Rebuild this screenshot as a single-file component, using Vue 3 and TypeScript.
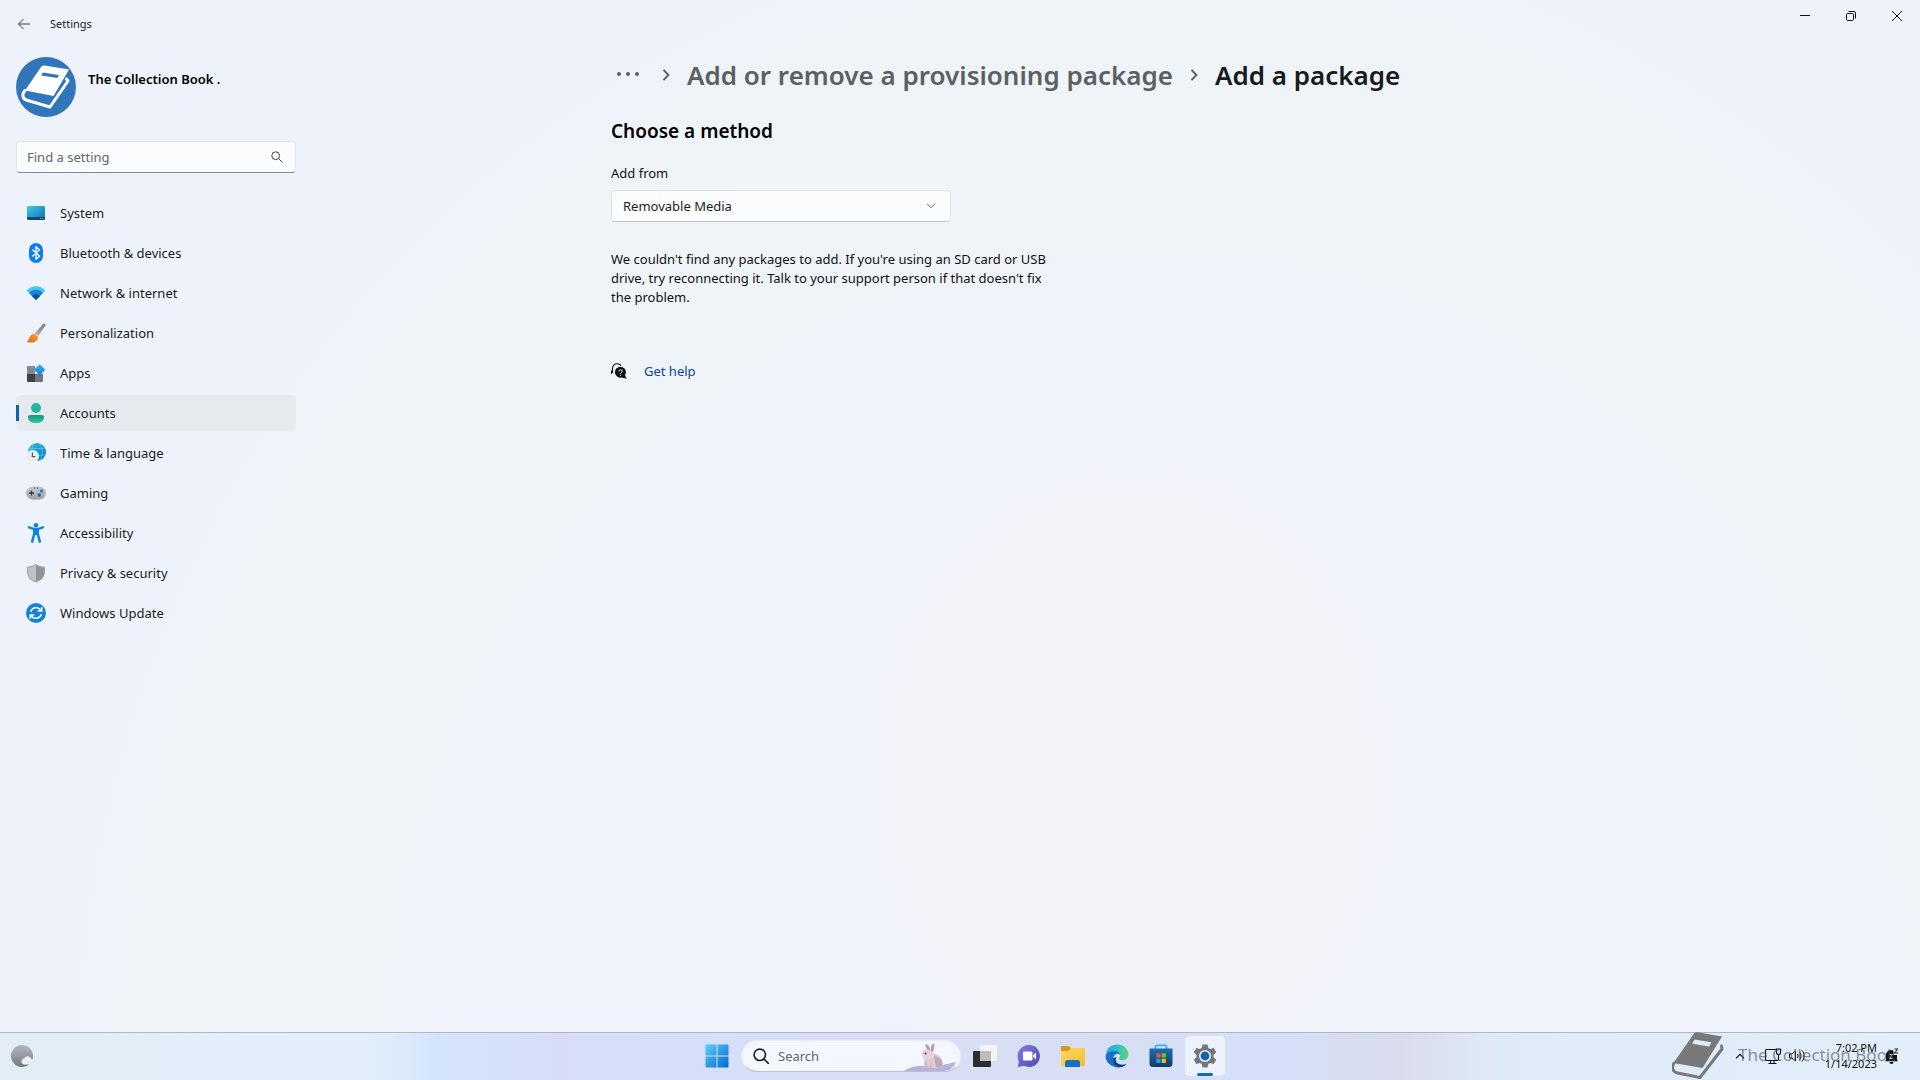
<script setup lang="ts">
import { ref } from 'vue'

interface NavItem {
  label: string
  art: string
}

const current = ref('Accounts')
const query = ref('')
const source = ref('Removable Media')

const navItems: NavItem[] = [
  {
    label: 'System',
    art: '<rect x="1" y="3" width="18" height="14" rx="1.4" fill="url(#g-sys)"/><path d="M1 14h18v1.600a1.400 1.400 0 0 1-1.400 1.400H2.400A1.400 1.400 0 0 1 1 15.600z" fill="#0b4a72"/><circle cx="14.500" cy="15.500" r=".5" fill="#9fd8f0"/><circle cx="16.500" cy="15.500" r=".5" fill="#9fd8f0"/>',
  },
  {
    label: 'Bluetooth & devices',
    art: '<rect x="3" y="0" width="14" height="20" rx="7" fill="#0b7df0"/><path d="M6.300 6.500l7.200 6.800-3.600 3V3.700l3.600 3-7.200 6.800" fill="none" stroke="#fff" stroke-width="1.300" stroke-linejoin="round"/>',
  },
  {
    label: 'Network & internet',
    art: '<path d="M.5 7.500C6 1.800 14 1.800 19.500 7.500L10 17z" fill="#49c8ef"/><path d="M3 10c4-4.200 10-4.200 14 0l-7 7z" fill="#1a86d6"/><path d="M6 13c2.400-2.300 5.600-2.300 8 0l-4 4z" fill="#0a4f9c"/>',
  },
  {
    label: 'Personalization',
    art: '<path d="M18.800.6c1 .6.7 1.700.2 2.600l-6.600 9.600-3.600-2.500L17 1.100c.6-.6 1.200-.8 1.800-.5z" fill="url(#g-grey)"/><path d="M8.200 10.600l3.700 2.700c.7 3.800-2.200 6.300-6 6.300-2 0-4.100-.2-5.200-1.400 1.700-.4 2-1.500 2.600-3.200.8-2.400 2.500-4.100 4.900-4.400z" fill="url(#g-orange)"/>',
  },
  {
    label: 'Apps',
    art: '<path d="M1 3h8v8H1z" fill="#858990"/><path d="M1 11h8v8H2a1 1 0 0 1-1-1z" fill="#3f4347"/><path d="M9 11h8v7a1 1 0 0 1-1 1H9z" fill="#6f747a"/><rect x="9.700" y="2.700" width="8" height="8" rx="1.200" transform="rotate(45 13.700 6.700)" fill="url(#g-blue)"/>',
  },
  {
    label: 'Accounts',
    art: '<circle cx="10" cy="5" r="5" fill="#22b79f"/><path d="M2 14a2 2 0 0 1 2-2h12a2 2 0 0 1 2 2c0 4-3.500 6-8 6s-8-2-8-6z" fill="url(#g-green)"/>',
  },
  {
    label: 'Time & language',
    art: '<circle cx="11" cy="9" r="9" fill="url(#g-globe)"/><path d="M3 5.500h16M2.500 12h17M8 1c-3 5-3 11 0 16M14 1c3 5 3 11 0 16" stroke="#6fdcf3" stroke-width=".5" fill="none"/><circle cx="6.600" cy="13.400" r="6.400" fill="#eceef0"/><path d="M6.400 9.600v4h3" stroke="#51565c" stroke-width="1.200" fill="none"/>',
  },
  {
    label: 'Gaming',
    art: '<rect x="0" y="3.500" width="20" height="13" rx="6.500" fill="url(#g-pad)"/><path d="M3 10h5M5.500 7.500v5" stroke="#34383c" stroke-width="1.300"/><circle cx="15.500" cy="8" r="1.700" fill="#2f7fc4"/><circle cx="13.300" cy="12" r="1.700" fill="#2467a8"/><circle cx="8.500" cy="5" r=".7" fill="#44484d"/><circle cx="11.500" cy="5" r=".7" fill="#44484d"/>',
  },
  {
    label: 'Accessibility',
    art: '<circle cx="10" cy="2.300" r="2.300" fill="#1683d8"/><path d="M3 4.300l4.500 1.600h5L17 4.300" fill="none" stroke="#1683d8" stroke-width="2.400" stroke-linecap="round" stroke-linejoin="round"/><path d="M7 5.500h6v6.500H7z" fill="#1683d8"/><path d="M8.200 11L6.200 18.600M11.800 11l2 7.600" stroke="#1683d8" stroke-width="2.600" stroke-linecap="round"/>',
  },
  {
    label: 'Privacy & security',
    art: '<path d="M10 1c2.800 2 5.600 2.600 9 2.700V9c0 5-3.600 8.600-9 10.400C4.600 17.600 1 14 1 9V3.700C4.400 3.600 7.200 3 10 1z" fill="#a3a7ab"/><path d="M10 2.200c2.400 1.600 5 2.300 7.900 2.500V9c0 4.500-3 7.600-7.900 9.200z" fill="#8f9397"/><path d="M10 2.200v16C5.100 16.600 2.100 13.500 2.100 9V4.700C5 4.500 7.600 3.800 10 2.200z" fill="#bfc3c7"/>',
  },
  {
    label: 'Windows Update',
    art: '<circle cx="10" cy="10" r="10" fill="#1583d4"/><path d="M4.700 8.700C6 4.200 12 3.300 14.800 7M15.300 11.300C14 15.800 8 16.700 5.200 13" fill="none" stroke="#fff" stroke-width="1.500"/><path d="M15.700 4v4h-4M4.300 16v-4h4" fill="none" stroke="#fff" stroke-width="1.500"/>',
  },
]
</script>

<template>
  <div class="desktop">
    <svg class="defs" width="0" height="0" aria-hidden="true">
      <defs>
        <linearGradient id="g-sys" x1="0" y1="0" x2="1" y2="1"><stop offset="0" stop-color="#3ccbe4" /><stop offset="1" stop-color="#0f6fb8" /></linearGradient>
        <linearGradient id="g-grey" x1="1" y1="0" x2="0" y2="1"><stop offset="0" stop-color="#777b80" /><stop offset="1" stop-color="#b4b7ba" /></linearGradient>
        <linearGradient id="g-orange" x1="1" y1="0" x2="0" y2="1"><stop offset="0" stop-color="#f9a53a" /><stop offset="1" stop-color="#dd6410" /></linearGradient>
        <linearGradient id="g-blue" x1="0" y1="0" x2="1" y2="1"><stop offset="0" stop-color="#3ab5f0" /><stop offset="1" stop-color="#1580cf" /></linearGradient>
        <linearGradient id="g-green" x1="0" y1="0" x2="0" y2="1"><stop offset="0" stop-color="#17977f" /><stop offset="1" stop-color="#2cc6a8" /></linearGradient>
        <linearGradient id="g-globe" x1="0" y1="0" x2="1" y2="1"><stop offset="0" stop-color="#26c0dc" /><stop offset="1" stop-color="#0d74c8" /></linearGradient>
        <linearGradient id="g-pad" x1="0" y1="0" x2="0" y2="1"><stop offset="0" stop-color="#c9ccd0" /><stop offset="1" stop-color="#9da2a8" /></linearGradient>
        <linearGradient id="g-start" x1="0" y1="0" x2="1" y2="1"><stop offset="0" stop-color="#5ad0fb" /><stop offset="1" stop-color="#0468c8" /></linearGradient>
        <linearGradient id="g-chat" x1="0" y1="0" x2="1" y2="1"><stop offset="0" stop-color="#8a79dc" /><stop offset="1" stop-color="#4c4bb4" /></linearGradient>
        <linearGradient id="g-folder" x1="0" y1="0" x2="1" y2="1"><stop offset="0" stop-color="#ffd968" /><stop offset="1" stop-color="#f5bb2c" /></linearGradient>
        <linearGradient id="g-edge" x1="0" y1="0" x2="1" y2="0"><stop offset="0" stop-color="#24a8e4" /><stop offset=".5" stop-color="#2fc0c8" /><stop offset="1" stop-color="#62d66a" /></linearGradient>
        <linearGradient id="g-store" x1="0" y1="0" x2="0" y2="1"><stop offset="0" stop-color="#1b6fae" /><stop offset="1" stop-color="#153a63" /></linearGradient>
        <linearGradient id="g-moon" x1="0" y1="0" x2="0" y2="1"><stop offset="0" stop-color="#b3b8be" /><stop offset="1" stop-color="#747b82" /></linearGradient>
      </defs>
    </svg>

    <section class="window">
      <header class="titlebar">
        <button class="back" type="button" aria-label="Back">
          <svg width="14" height="12" viewBox="0 0 14 12"><path d="M13 6H1.500M6.500 1l-5 5 5 5" fill="none" stroke="#3c4045" stroke-width="1" /></svg>
        </button>
        <span class="app-name">Settings</span>
        <div class="caption">
          <button type="button" aria-label="Minimize">
            <svg width="10" height="10" viewBox="0 0 10 10"><path d="M0 4.500h10" stroke="#111" /></svg>
          </button>
          <button type="button" aria-label="Restore">
            <svg width="10" height="10" viewBox="0 0 10 10" fill="none" stroke="#111"><rect x=".5" y="2.500" width="7" height="7" rx="1.200" /><path d="M2.500.5H8A1.500 1.500 0 0 1 9.500 2v5.500" /></svg>
          </button>
          <button type="button" aria-label="Close">
            <svg width="10" height="10" viewBox="0 0 10 10"><path d="M0 0l10 10M10 0L0 10" stroke="#111" /></svg>
          </button>
        </div>
      </header>

      <div class="body">
        <aside class="sidebar">
          <div class="profile">
            <svg width="60" height="60" viewBox="0 0 60 60">
              <circle cx="30" cy="30" r="30" fill="#3176bb" />
              <path d="M28.500 8.500L53 12.500 37.500 39 9 33.500 24 11.500q1.700-3.500 4.500-3z" fill="#fff" />
              <path d="M27 15.500l16 2.500-1.700 3-16.300-2.600z" fill="#3176bb" />
              <path d="M9 33.500c-3.500 4-2.500 8.500 2 9.800L34 50l18-26-1.500-2" fill="none" stroke="#fff" stroke-width="3" stroke-linecap="round" stroke-linejoin="round" />
            </svg>
            <span class="name">The Collection Book .</span>
          </div>

          <label class="search">
            <input v-model="query" type="text" placeholder="Find a setting" aria-label="Find a setting" />
            <svg width="12" height="12" viewBox="0 0 12 12" fill="none" stroke="#40454a"><circle cx="4.700" cy="4.700" r="3.900" /><path d="M7.500 7.500l4 4" /></svg>
          </label>

          <nav>
            <a
              v-for="item in navItems"
              :key="item.label"
              href="#"
              :class="{ active: item.label === current }"
              @click.prevent="current = item.label"
            >
              <svg width="20" height="20" viewBox="0 0 20 20" aria-hidden="true" v-html="item.art"></svg>
              <span>{{ item.label }}</span>
            </a>
          </nav>
        </aside>

        <main>
          <div class="page">
            <div class="crumbs">
              <button class="more" type="button" aria-label="More">
                <svg width="24" height="6" viewBox="0 0 24 6" fill="#5a5e62"><circle cx="3" cy="3" r="2" /><circle cx="12" cy="3" r="2" /><circle cx="21" cy="3" r="2" /></svg>
              </button>
              <svg class="sep" width="8" height="12" viewBox="0 0 8 12"><path d="M1.500 1l5 5-5 5" fill="none" stroke="#5a5e62" stroke-width="1.800" /></svg>
              <a href="#">Add or remove a provisioning package</a>
              <svg class="sep" width="8" height="12" viewBox="0 0 8 12"><path d="M1.500 1l5 5-5 5" fill="none" stroke="#5a5e62" stroke-width="1.800" /></svg>
              <h1>Add a package</h1>
            </div>

            <h2>Choose a method</h2>
            <label class="field-label" for="source">Add from</label>
            <div class="select">
              <select id="source" v-model="source">
                <option>Removable Media</option>
              </select>
              <svg width="10" height="6" viewBox="0 0 10 6"><path d="M1 .7l4 4 4-4" fill="none" stroke="#5c6065" /></svg>
            </div>

            <p>
              We couldn't find any packages to add. If you're using an SD card or USB<br />
              drive, try reconnecting it. Talk to your support person if that doesn't fix<br />
              the problem.
            </p>

            <div class="help">
              <svg width="16" height="16" viewBox="0 0 16 16">
                <path d="M1.500 10V5.500C1.500 2.500 3.500.8 6 .8c2 0 3.300.7 4 1.800M.5 7.500V11" fill="none" stroke="#111" stroke-width="1.100" />
                <circle cx="9.400" cy="9.200" r="5.500" fill="#111" />
                <path d="M13.500 11l2.300 4.800-5.300-1.200z" fill="#111" />
                <path d="M8 8.300c0-2 3.200-2 3.200-.1 0 1.200-1.600 1.200-1.600 2.400M9.600 11.700v1" fill="none" stroke="#fff" stroke-width="1" />
              </svg>
              <a href="#">Get help</a>
            </div>
          </div>
        </main>
      </div>
    </section>

    <footer class="taskbar">
      <button class="weather" type="button" aria-label="Widgets">
        <svg width="24" height="24" viewBox="0 0 24 24"><circle cx="12" cy="12" r="11" fill="url(#g-moon)" /><path d="M14 20.500a3.200 3.200 0 0 1 .2-6.300 4 4 0 0 1 7.300.9 2.800 2.800 0 0 1 0 5.400z" fill="#eceef1" /></svg>
      </button>

      <div class="dock">
        <button class="tile" type="button" aria-label="Start">
          <svg width="24" height="24" viewBox="0 0 24 24" fill="url(#g-start)"><path d="M.5 1.500a1 1 0 0 1 1-1h10v11H.5zM12.500.5h10a1 1 0 0 1 1 1v10h-11zM.5 12.500h11v11h-10a1 1 0 0 1-1-1zM12.500 12.500h11v10a1 1 0 0 1-1 1h-10z" /></svg>
        </button>
        <label class="find">
          <svg width="16" height="16" viewBox="0 0 16 16" fill="none" stroke="#222" stroke-width="1.700"><circle cx="6.800" cy="6.800" r="5.700" /><path d="M11 11l4.300 4.300" stroke-linecap="round" /></svg>
          <input type="text" placeholder="Search" aria-label="Search" />
          <svg class="rabbit" width="52" height="28" viewBox="0 0 52 28">
            <path d="M0 28c6-5 16-6 26-5 10 .5 20-3 26-4-2 5-6 9-12 9z" fill="#b6b2dc" />
            <path d="M22 25c-3-4-2-10 1-13l5-2c7 1 11 6 11 11 0 3-2 4-4 4z" fill="#dccbd4" />
            <path d="M30 13c6 1 9 5 8 10-2 2-4 2-6 1z" fill="#bca8be" />
            <path d="M18 11c0-3 3-5 6-5s5 3 5 6-3 5-6 5-5-3-5-6z" fill="#e2d3d8" />
            <path d="M24 7c-3-3-3-5-2-6 2 0 4 3 4 6zM27 8c-1-4 1-7 3-8 1 3 0 6-1 9z" fill="#b99fae" />
            <circle cx="21.500" cy="10.500" r="1" fill="#43394a" />
            <path d="M21 16l3 9h-3zM27 18l1 8h-3z" fill="#c9b4c4" />
          </svg>
        </label>
        <button class="tile" type="button" aria-label="Task View">
          <svg width="24" height="24" viewBox="0 0 24 24"><rect x="0" y="7" width="18" height="16" rx="1" fill="#2d2d2f" /><rect x="7" y="1" width="17" height="16" rx="1" fill="#f4f4f4" /><path d="M7 7h11v10H8a1 1 0 0 1-1-1z" fill="#bdbdbb" /></svg>
        </button>
        <button class="tile" type="button" aria-label="Chat">
          <svg width="24" height="24" viewBox="0 0 24 24"><path d="M12 1a11 11 0 1 1-5 20.800L1 23l.8-6A11 11 0 0 1 12 1z" fill="url(#g-chat)" /><rect x="6" y="7.500" width="9.500" height="9" rx="1.200" fill="#fff" /><path d="M16.300 11l2.700-2.500v7L16.300 13z" fill="#fff" /></svg>
        </button>
        <button class="tile" type="button" aria-label="File Explorer">
          <svg width="24" height="24" viewBox="0 0 24 24"><path d="M0 3a1 1 0 0 1 1-1h7l2 2-2 4H0z" fill="#d99a17" /><path d="M0 7h7.500l3-3H23a1 1 0 0 1 1 1v16a1 1 0 0 1-1 1H1a1 1 0 0 1-1-1z" fill="url(#g-folder)" /><path d="M4 23v-4.500A2.500 2.500 0 0 1 6.500 16h10a2.500 2.500 0 0 1 2.500 2.500V23z" fill="#1271c4" /></svg>
        </button>
        <button class="tile" type="button" aria-label="Edge">
          <svg width="24" height="24" viewBox="0 0 24 24"><path d="M1 10C2 4 6.500.5 12 .5c7 0 11.500 5 11.500 9.800 0 3.700-2.700 6-5.800 6-2.300 0-3.700-.8-3.700-1.700 0-.8 1.200-1.300 1.200-3 0-2-2-4-5-4-4 0-7.700 2.200-9.200 5z" fill="url(#g-edge)" /><path d="M.6 12C2 8.800 5.500 7 9.300 7c3.600 0 5.800 2 5.900 4.200-1-1.400-2.400-1.700-3.800-1.300-2.300.7-3.600 3-3.300 6 .4 3.500 3.500 6.200 7.400 6.200 2.600 0 4.600-.9 6.200-2-2.200 2.300-5.500 3.600-9 3.400C5.800 23 .4 18 .6 12z" fill="#1670c8" /><path d="M8.200 14c-1 5 2.600 9.300 7 9.100 2.800-.2 5-1.500 6.500-3.400-2.400 1.200-7 1.500-9.500-.7-1.900-1.600-1.800-4.100-.6-6z" fill="#123f82" /></svg>
        </button>
        <button class="tile" type="button" aria-label="Store">
          <svg width="24" height="24" viewBox="0 0 24 24"><path d="M6.500 6V2.500A1.200 1.200 0 0 1 7.700 1.300h8.600a1.200 1.200 0 0 1 1.200 1.200V6" fill="none" stroke="#37b4ef" stroke-width="1.800" /><path d="M.5 4.500h23v15a3.500 3.500 0 0 1-3.500 3.500H4A3.500 3.500 0 0 1 .5 19.500z" fill="url(#g-store)" /><path d="M7.300 9.300h4.200v4.200H7.300z" fill="#f0522a" /><path d="M12.700 9.300h4.200v4.200h-4.200z" fill="#82bb1c" /><path d="M7.300 14.700h4.200v4.200H7.300z" fill="#1ba5ea" /><path d="M12.700 14.700h4.200v4.200h-4.200z" fill="#fbb91e" /></svg>
        </button>
        <button class="tile open" type="button" aria-label="Settings">
          <svg width="24" height="24" viewBox="0 0 24 24"><path d="M9.500.5h5l.8 3.500 2 1.100 3.400-1.100 2.500 4.300-2.600 2.500v2.400l2.600 2.500-2.500 4.300-3.400-1.100-2 1.100-.8 3.500h-5L8.700 20l-2-1.100L3.300 20 .8 15.700l2.600-2.500v-2.400L.8 8.300 3.300 4l3.400 1.100 2-1.100z" fill="#73777b" /><circle cx="12" cy="12" r="6" fill="#eef2f6" /><circle cx="12" cy="12" r="4.400" fill="#1262ac" /></svg>
        </button>
      </div>

      <div class="tray">
        <svg class="up" width="10" height="6" viewBox="0 0 10 6"><path d="M1 5.300l4-4 4 4" fill="none" stroke="#111" stroke-width="1.200" /></svg>
        <svg width="16" height="16" viewBox="0 0 16 16" fill="none" stroke="#111" stroke-width="1.100"><path d="M11 1.500H1.500A1 1 0 0 0 .5 2.500v9a1 1 0 0 0 1 1h11a1 1 0 0 0 1-1V7M5.500 12.500v3M9 12.500v3M3.500 15.500h8" /><path d="M11.500 1h4v3.500a2 2 0 0 1-4 0z" /></svg>
        <svg class="sound" width="16" height="14" viewBox="0 0 16 14" fill="none" stroke="#111"><path d="M.5 5h2.500l3.500-3v10L3 9H.5z" /><path d="M8.500 5c.8 1.200.8 2.800 0 4M10.700 3.300c1.800 2.200 1.800 5.200 0 7.400M13 1.500c2.800 3.300 2.800 7.700 0 11" /></svg>
        <div class="clock">
          <time>7:02 PM</time>
          <time>1/14/2023</time>
        </div>
        <svg width="16" height="16" viewBox="0 0 16 16"><path d="M2 12V7a5 5 0 0 1 7.500-4.300V7H13v5l1.200 1.300H.8zM5.500 14h4a2 2 0 0 1-4 0z" fill="#111" /><path d="M5.500 6.500h3l-3 4h3" fill="none" stroke="#dfeaf6" /><path d="M10.500 1H14l-3.500 4H14" fill="none" stroke="#111" /></svg>
      </div>

      <div class="watermark" aria-hidden="true">
        <svg width="52" height="48" viewBox="0 0 52 48"><path d="M22 1.500Q23.500 0 25.500.3L50 4.500 30.500 36 1.500 31z" fill="#77797b" /><path d="M22.500 7.500l17 2.800-2.300 4.200-17-2.800z" fill="#e2eaf3" /><path d="M2 31c-3 5-1 9 3.500 10L28 45.500 50 17l-.5-3" fill="none" stroke="#77797b" stroke-width="3" stroke-linejoin="round" stroke-linecap="round" /></svg>
        <span>The Collection Book</span>
      </div>
    </footer>
  </div>
</template>

<style>
body {
  margin: 0;
}
</style>

<style scoped>
.desktop {
  min-height: 100vh;
  display: flex;
  flex-direction: column;
  font-family: 'Noto Sans', 'Open Sans', sans-serif;
  font-size: 13px;
  line-height: 20px;
  color: #1b1c1e;
  background:
    radial-gradient(ellipse 16% 34% at 59% 72%, #f2f2f7 60%, transparent 100%),
    radial-gradient(ellipse 55% 105% at 60% 100%, #f0f3fb 68%, #eff4f8 76%, #eff4f8 94%, #eef3fb 104%);
}

.defs {
  position: absolute;
}

button {
  border: 0;
  padding: 0;
  background: none;
  font: inherit;
  color: inherit;
  display: flex;
  align-items: center;
  justify-content: center;
}

a {
  color: inherit;
  text-decoration: none;
}

svg {
  flex: none;
  display: block;
}

.window {
  flex: 1;
  display: flex;
  flex-direction: column;
}

.titlebar {
  display: flex;
  align-items: center;
  height: 48px;
}

.back {
  width: 48px;
  height: 48px;
}

.app-name {
  font-size: 11px;
  margin-left: 2px;
}

.caption {
  display: flex;
  align-self: flex-start;
  margin-left: auto;
}

.caption button {
  width: 46px;
  height: 32px;
}

.body {
  flex: 1;
  display: flex;
}

.sidebar {
  width: 280px;
  padding: 9px 6px 0 16px;
}

.profile {
  display: flex;
  gap: 12px;
}

.name {
  padding-top: 12px;
  font-weight: 600;
  color: #000;
}

.search {
  display: flex;
  align-items: center;
  height: 32px;
  box-sizing: border-box;
  margin-top: 24px;
  padding: 0 12px 0 10px;
  background: #fbfcfe;
  border: 1px solid #e0e5ea;
  border-bottom: 1px solid #83878b;
  border-radius: 4px;
}

input {
  flex: 1;
  min-width: 0;
  border: 0;
  padding: 0;
  outline: 0;
  background: none;
  font: inherit;
  color: inherit;
}

input::placeholder {
  color: #63676b;
  opacity: 1;
}

nav {
  display: flex;
  flex-direction: column;
  gap: 4px;
  margin-top: 22px;
}

nav a {
  display: flex;
  align-items: center;
  gap: 14px;
  height: 36px;
  padding-left: 10px;
  border-radius: 4px;
}

nav a.active {
  background: linear-gradient(#0f62ae, #0f62ae) 0 center / 3px 16px no-repeat, #e5eaee;
}

main {
  flex: 1;
}

.page {
  max-width: 1000px;
  margin: 0 auto;
  padding: 7px 0 0;
}

.crumbs {
  display: flex;
  align-items: center;
  height: 40px;
  font-size: 26px;
  font-weight: 600;
  line-height: 40px;
  white-space: nowrap;
  color: #5c6064;
}

.more {
  width: 34px;
  height: 34px;
  padding-bottom: 3px;
}

.sep {
  margin: 0 17px;
}

h1 {
  margin: 0;
  font: inherit;
  color: #191a1c;
}

h2 {
  margin: 22px 0 18px;
  font-size: 19px;
  font-weight: 600;
  line-height: 28px;
  color: #000;
}

.field-label {
  display: block;
  color: #111;
}

.select {
  position: relative;
  margin-top: 7px;
  width: 340px;
}

select {
  appearance: none;
  width: 100%;
  height: 32px;
  padding: 0 32px 0 11px;
  border: 1px solid #e0e5ea;
  border-bottom-color: #c3c7cb;
  border-radius: 4px;
  background: #fbfcfe;
  font: inherit;
  color: inherit;
}

.select svg {
  position: absolute;
  right: 15px;
  top: 13px;
}

p {
  margin: 28px 0 54px;
  line-height: 19px;
  white-space: nowrap;
  color: #111;
}

.help {
  display: flex;
  align-items: center;
  gap: 17px;
}

.help a {
  color: #0b4595;
}

.taskbar {
  position: relative;
  display: grid;
  grid-template-columns: 1fr auto 1fr;
  align-items: center;
  height: 48px;
  box-sizing: border-box;
  padding-bottom: 2px;
  border-top: 1px solid #b0b7c3;
  background: linear-gradient(90deg, #e2edf7 0%, #e2eefa 19%, #d3e4fb 23%, #d7ddf7 29%, #d5e0f8 36%, #d8def5 44%, #d8def3 56%, #d5e0f8 66%, #d9dced 73%, #dfeaf8 78%, #e2eefa 100%);
}

.weather {
  width: 44px;
  height: 44px;
}

.dock {
  display: flex;
  align-items: center;
  margin-left: 2px;
}

.tile {
  width: 40px;
  height: 40px;
  margin: 0 2px;
  border-radius: 4px;
}

.tile.open {
  position: relative;
  background: #edf2fb;
}

.tile.open::after {
  content: '';
  position: absolute;
  bottom: 0;
  left: 12px;
  width: 16px;
  height: 3px;
  border-radius: 2px;
  background: #0f6cbd;
}

.find {
  display: flex;
  align-items: center;
  gap: 9px;
  width: 220px;
  height: 32px;
  box-sizing: border-box;
  margin: 0 2px;
  padding: 0 4px 0 11px;
  border: 1px solid #e6ebf6;
  border-bottom-color: #b9c1d3;
  border-radius: 16px;
  background: #f4f7fd;
  overflow: hidden;
}

.rabbit {
  align-self: flex-end;
}

.tray {
  display: flex;
  align-items: center;
  justify-content: flex-end;
  padding-right: 20px;
  color: #111;
}

.up {
  margin-right: 20px;
}

.sound {
  margin-left: 8px;
}

.clock {
  display: flex;
  flex-direction: column;
  width: 72px;
  margin-right: 7px;
  font-size: 11px;
  line-height: 16px;
  text-align: right;
}

.watermark {
  position: absolute;
  top: -1px;
  right: 24px;
  display: flex;
  align-items: center;
  gap: 14px;
  font-size: 17px;
  color: rgba(70, 75, 82, 0.6);
  white-space: nowrap;
  pointer-events: none;
}

.watermark span {
  padding-bottom: 3px;
}
</style>
